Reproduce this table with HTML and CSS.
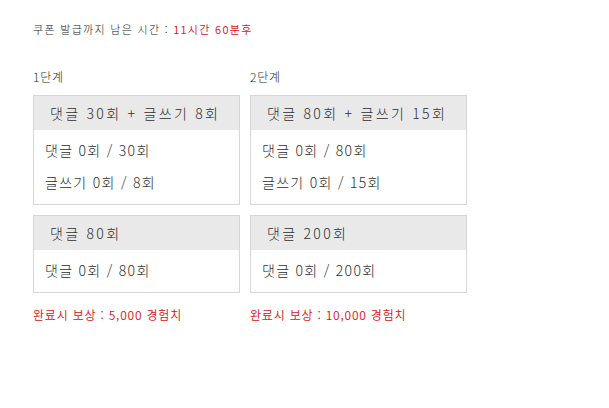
FILE: index.html
```html
<!DOCTYPE html>
<html lang="ko">
<head>
<meta charset="utf-8">
<title>미션</title>
<link rel="stylesheet" href="styles.css">
</head>
<body>
<div class="page">
  <p class="timer">쿠폰 발급까지 남은 시간 : <span class="red">11시간 60분후</span></p>
  <div class="stages">
    <div class="stage stage-1">
      <div class="stage-title">1단계</div>
      <div class="box">
        <div class="box-head">댓글 30회 + 글쓰기 8회</div>
        <div class="box-body">
          <div class="line">댓글 0회 / 30회</div>
          <div class="line">글쓰기 0회 / 8회</div>
        </div>
      </div>
      <div class="box">
        <div class="box-head">댓글 80회</div>
        <div class="box-body">
          <div class="line">댓글 0회 / 80회</div>
        </div>
      </div>
      <div class="reward">완료시 보상 : 5,000 경험치</div>
    </div>
    <div class="stage stage-2">
      <div class="stage-title">2단계</div>
      <div class="box">
        <div class="box-head">댓글 80회 + 글쓰기 15회</div>
        <div class="box-body">
          <div class="line">댓글 0회 / 80회</div>
          <div class="line">글쓰기 0회 / 15회</div>
        </div>
      </div>
      <div class="box">
        <div class="box-head">댓글 200회</div>
        <div class="box-body">
          <div class="line">댓글 0회 / 200회</div>
        </div>
      </div>
      <div class="reward">완료시 보상 : 10,000 경험치</div>
    </div>
  </div>
</div>
</body>
</html>
```

FILE: styles.css
```css
html, body {
  margin: 0;
  padding: 0;
  background: #ffffff;
}
body {
  font-family: "Noto Sans CJK KR", "Noto Sans", sans-serif;
  font-weight: 300;
  color: #2a2a2a;
}
.page {
  padding: 20px 0 0 33px;
}
.timer {
  margin: 0;
  font-size: 11px;
  line-height: 18px;
  letter-spacing: 1.3px;
  color: #222222;
}
.red {
  color: #d81010;
  font-weight: 350;
}
.stages {
  display: flex;
  gap: 10px;
  margin-top: 30px;
}
.stage {
  display: flex;
  flex-direction: column;
  gap: 10px;
}
.stage-1 { width: 207px; }
.stage-2 { width: 217px; }
.stage-title {
  font-size: 12px;
  line-height: 18px;
  letter-spacing: 0.8px;
  color: #2a2a2a;
  margin-bottom: -1px;
}
.box {
  border: 1px solid #d6d6d6;
  background: #ffffff;
}
.box-head {
  background: #e9e9e9;
  height: 34px;
  line-height: 34px;
  padding: 0 16px;
  font-size: 14px;
  letter-spacing: 2.3px;
  color: #2e2e2e;
  white-space: nowrap;
}
.box-body {
  padding: 5px 11px 7px;
  display: flex;
  flex-direction: column;
  gap: 2px;
}
.line {
  font-size: 14px;
  line-height: 30px;
  letter-spacing: 1.3px;
  color: #2e2e2e;
  white-space: nowrap;
}
.reward {
  margin-top: 1px;
  font-size: 12px;
  font-weight: 350;
  line-height: 22px;
  letter-spacing: 0.8px;
  color: #d81010;
}
```
